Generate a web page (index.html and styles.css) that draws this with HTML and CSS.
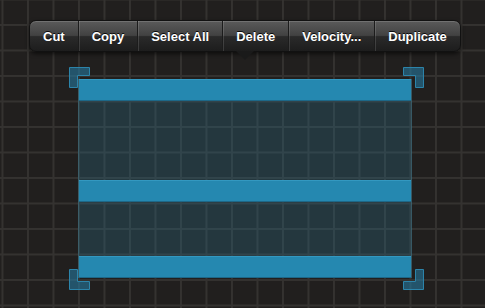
FILE: index.html
```html
<!DOCTYPE html>
<html lang="en">
<head>
    <meta charset="UTF-8">
    <meta name="viewport" content="width=device-width, initial-scale=1.0">
    <title>Piano Roll Selection</title>
    <link rel="stylesheet" href="styles.css">
</head>
<body>
    <div class="canvas">
        <!-- corner handles sit under the selection -->
        <svg class="handle handle-tl" width="21" height="21" viewBox="0 0 21 21"><path d="M0.5 0.5H20.5V8.5H8.5V20.5H0.5Z"/></svg>
        <svg class="handle handle-tr" width="21" height="21" viewBox="0 0 21 21"><path d="M0.5 0.5H20.5V8.5H8.5V20.5H0.5Z"/></svg>
        <svg class="handle handle-bl" width="21" height="21" viewBox="0 0 21 21"><path d="M0.5 0.5H20.5V8.5H8.5V20.5H0.5Z"/></svg>
        <svg class="handle handle-br" width="21" height="21" viewBox="0 0 21 21"><path d="M0.5 0.5H20.5V8.5H8.5V20.5H0.5Z"/></svg>

        <div class="selection">
            <div class="note"></div>
            <div class="note note-2"></div>
            <div class="note note-3"></div>
        </div>

        <div class="menu">
            <div class="menu-item">Cut</div>
            <div class="menu-item">Copy</div>
            <div class="menu-item">Select All</div>
            <div class="menu-item">Delete</div>
            <div class="menu-item">Velocity...</div>
            <div class="menu-item">Duplicate</div>
            <div class="menu-arrow"></div>
        </div>
    </div>
</body>
</html>
```

FILE: styles.css
```css
html, body {
    margin: 0;
    padding: 0;
}
body {
    width: 485px;
    height: 308px;
    overflow: hidden;
    background-color: #211f1e;
    background-image:
        linear-gradient(to right, #343230 0, #343230 2px, transparent 2px),
        linear-gradient(to bottom, #343230 0, #343230 2px, transparent 2px);
    background-size: 25.5px 25.5px;
    background-position: 1.5px -1.5px;
    font-family: "Liberation Sans", Arial, sans-serif;
}
.canvas {
    position: relative;
    width: 485px;
    height: 308px;
}

/* selection */
.selection {
    position: absolute;
    left: 78px;
    top: 79px;
    width: 334px;
    height: 199px;
    display: flex;
    flex-direction: column;
    background: rgba(42, 112, 140, 0.3);
    border-left: 1px solid rgba(80, 140, 160, 0.35);
    border-right: 1px solid rgba(80, 140, 160, 0.35);
    box-sizing: border-box;
}
.note {
    height: 22px;
    background: #2588b0;
    border-top: 1px solid #3398c0;
    border-bottom: 1px solid #1d6888;
    box-sizing: border-box;
}
.note-2 {
    margin-top: 79px;
}
.note-3 {
    margin-top: 54px;
}

.handle {
    position: absolute;
    display: block;
}
.handle path {
    fill: rgba(36, 120, 158, 0.6);
    stroke: #2c84aa;
    stroke-width: 1;
}
.handle-tl {
    left: 69px;
    top: 67px;
}
.handle-tr {
    left: 403px;
    top: 67px;
    transform: scaleX(-1);
}
.handle-bl {
    left: 69px;
    top: 269px;
    transform: scaleY(-1);
}
.handle-br {
    left: 403px;
    top: 269px;
    transform: scale(-1, -1);
}

/* popup menu */
.menu {
    position: absolute;
    left: 29px;
    top: 20px;
    height: 32px;
    display: flex;
    border: 1px solid #111;
    border-radius: 7px;
    box-sizing: border-box;
    background: linear-gradient(to bottom, #5a5a5a 0%, #424242 48%, #2a2a2a 52%, #1d1d1d 100%);
    box-shadow: 0 2px 4px rgba(0, 0, 0, 0.6), inset 0 1px 0 rgba(255, 255, 255, 0.15);
}
.menu-item {
    display: flex;
    align-items: center;
    padding: 0 13px;
    color: #fff;
    font-size: 13px;
    font-weight: bold;
    text-shadow: 0 -1px 0 rgba(0, 0, 0, 0.85);
    border-left: 1px solid #1c1c1c;
    box-shadow: inset 1px 0 0 rgba(255, 255, 255, 0.13);
}
.menu-item:first-child {
    border-left: none;
    box-shadow: none;
}
.menu-arrow {
    position: absolute;
    left: 206px;
    top: 30px;
    width: 0;
    height: 0;
    border-left: 9px solid transparent;
    border-right: 9px solid transparent;
    border-top: 9px solid #1a1a1a;
}
```
